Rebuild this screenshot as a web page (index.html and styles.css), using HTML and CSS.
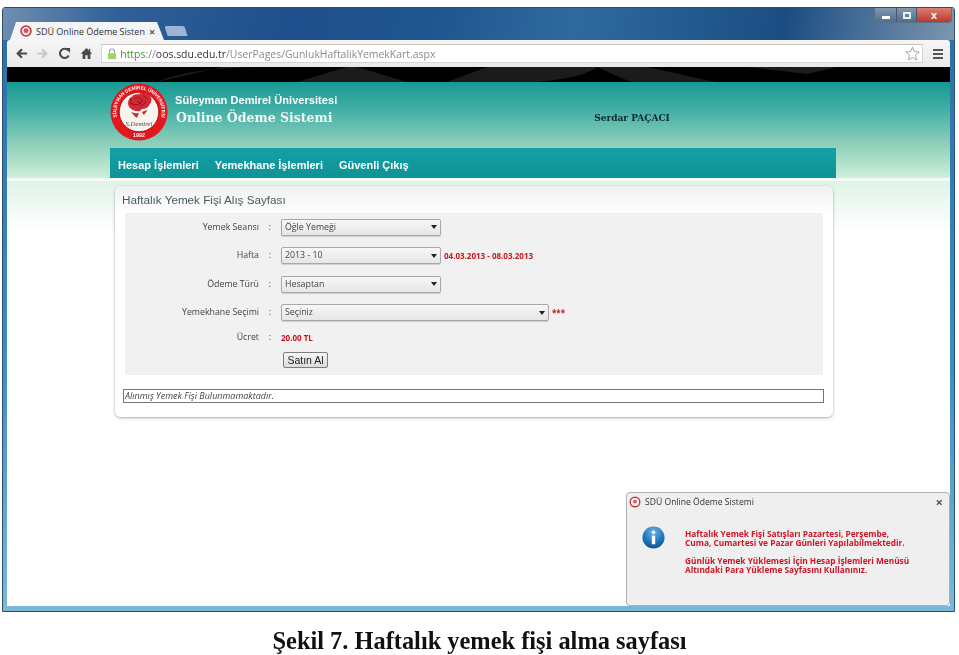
FILE: index.html
```html
<!DOCTYPE html>
<html lang="tr">
<head>
<meta charset="utf-8">
<title>Şekil 7</title>
<link rel="stylesheet" href="styles.css">
</head>
<body>
<div class="shot">
  <div class="window">
    <div class="titlebar">
      <div class="tab">
        <svg class="fav" viewBox="0 0 14 14"><circle cx="7" cy="7" r="5.8" fill="#f4e4e4" stroke="#c8303a" stroke-width="1.8"/><circle cx="7" cy="6.6" r="2.8" fill="#d8505a"/></svg>
        <span class="tab-title">SDÜ Online Ödeme Sisten</span>
        <span class="tab-x">×</span>
      </div>
      <div class="newtab"></div>
      <div class="winctl">
        <span class="wb"><i class="min"></i></span>
        <span class="wb narrow"><i class="max"></i></span>
        <span class="wb close">x</span>
      </div>
    </div>
    <div class="toolbar">
      <svg class="tool" viewBox="0 0 14 14"><path d="M13 7H3.5M7.5 2.5 3 7l4.5 4.5" fill="none" stroke="#4a4a4a" stroke-width="2.4"/></svg>
      <svg class="tool" viewBox="0 0 14 14"><path d="M1 7h9.5M6.5 2.5 11 7l-4.5 4.5" fill="none" stroke="#c4c8cc" stroke-width="2.2"/></svg>
      <svg class="tool" viewBox="0 0 14 14"><path d="M11.6 9.2A5 5 0 1 1 10.8 3.4" fill="none" stroke="#4a4a4a" stroke-width="2.3"/><path d="M8 1h5v5.4z" fill="#4a4a4a"/></svg>
      <svg class="tool" viewBox="0 0 14 14"><path d="M7 1 .8 7.2h2V13h3V9h2.4v4h3V7.2h2L11 5.2V2H9.6v1.8z" fill="#4a4a4a"/></svg>
      <div class="omni">
        <svg class="lock" viewBox="0 0 12 14"><path d="M3 6V4a3 3 0 0 1 6 0v2" fill="none" stroke="#9aa890" stroke-width="1.4"/><rect x="1" y="6" width="10" height="7.4" rx="1" fill="#a2d06a"/></svg>
        <span class="url"><b class="https">https</b><em>://</em><b class="host">oos.sdu.edu.tr</b><em>/UserPages/GunlukHaftalikYemekKart.aspx</em></span>
        <svg class="star" viewBox="0 0 16 16"><path d="M8 1.2 10 6l5.2.4-4 3.4 1.3 5.1L8 12.2l-4.5 2.7 1.3-5.1-4-3.4L6 6z" fill="#fff" stroke="#9aa0a4"/></svg>
      </div>
      <div class="menu"><i></i><i></i><i></i></div>
    </div>
    <div class="page">
      <div class="blackbar">
        <svg class="swirl" viewBox="0 0 943 15" preserveAspectRatio="none"><path d="M150 15C175 4 215 0 260 0H215C190 6 170 10 150 15zM290 15 340 0H350L400 15zM440 15 480 0H590C580 8 560 12 530 15zM625 15C610 10 600 4 590 0H640C670 6 690 12 710 15zM660 0H830L800 7 740 0z" fill="#1b1b1b"/></svg>
      </div>
      <header class="head">
        <div class="head-inner">
          <svg class="logo" viewBox="0 0 60 60">
            <defs><path id="ring" d="M13.3 46.7A23.6 23.6 0 1 1 46.7 46.7"/></defs>
            <circle cx="30" cy="30" r="29.5" fill="#e3181f"/>
            <circle cx="30" cy="30" r="20.5" fill="#f8f4ee" stroke="#a81218" stroke-width="1"/>
            <text class="ring-text"><textPath href="#ring" startOffset="50%" text-anchor="middle">SÜLEYMAN DEMİREL ÜNİVERSİTESİ</textPath></text>
            <path d="M29 12c4-3 10-2 12 1 3 3 2 7 0 9-1 3-4 5-8 5-2 2-3 3-5 2-4 0-8-3-9-6-1-4 1-8 4-9 1-2 4-3 6-2z" fill="#d22a34"/>
            <path d="M25 16c3-2 7-1 8 2M28 19c2 2 5 1 6-1M22 21c3 2 7 2 10 0M31 24c2-1 5-2 6-5M35 13c1 2 2 3 4 3M21 16c1 2 1 3 0 5" fill="none" stroke="#8e1119" stroke-width="1"/>
            <path d="M22 30c3 1 6 2 8 1l-2 5c-2-1-4-3-6-6zM33 30l6-2-4 5z" fill="#c82a34"/>
            <text class="sign" x="30" y="44">S.Demirel</text>
            <text class="year" x="30" y="56">1992</text>
          </svg>
          <div class="brand">
            <div class="brand-top">Süleyman Demirel Üniversitesi</div>
            <div class="brand-main">Online Ödeme Sistemi</div>
          </div>
          <div class="user">Serdar PAÇACI</div>
        </div>
        <nav class="nav">
          <a>Hesap İşlemleri</a>
          <a>Yemekhane İşlemleri</a>
          <a>Güvenli Çıkış</a>
        </nav>
      </header>
      <main class="body">
        <section class="panel">
          <h1 class="panel-title">Haftalık Yemek Fişi Alış Sayfası</h1>
          <div class="form">
            <div class="row">
              <label class="lbl">Yemek Seansı</label><span class="colon">:</span>
              <div class="sel"><span>Öğle Yemeği</span><i></i></div>
            </div>
            <div class="row">
              <label class="lbl">Hafta</label><span class="colon">:</span>
              <div class="sel"><span>2013 - 10</span><i></i></div>
              <span class="red">04.03.2013 - 08.03.2013</span>
            </div>
            <div class="row">
              <label class="lbl">Ödeme Türü</label><span class="colon">:</span>
              <div class="sel"><span>Hesaptan</span><i></i></div>
            </div>
            <div class="row">
              <label class="lbl">Yemekhane Seçimi</label><span class="colon">:</span>
              <div class="sel wide"><span>Seçiniz</span><i></i></div>
              <span class="red stars">***</span>
            </div>
            <div class="row short">
              <label class="lbl">Ücret</label><span class="colon">:</span>
              <span class="red price">20.00 TL</span>
            </div>
            <div class="row btn-row"><button class="buy">Satın Al</button></div>
          </div>
          <div class="note">Alınmış Yemek Fişi Bulunmamaktadır.</div>
        </section>
      </main>
      <aside class="popup">
        <div class="pop-head">
          <svg class="pop-fav" viewBox="0 0 14 14"><circle cx="7" cy="7" r="5.6" fill="#fff" stroke="#c8303a" stroke-width="1.6"/><circle cx="7" cy="6.4" r="2.4" fill="#d8606a"/></svg>
          <span>SDÜ Online Ödeme Sistemi</span>
          <span class="pop-x">×</span>
        </div>
        <div class="pop-body">
          <svg class="info" viewBox="0 0 24 24">
            <defs><radialGradient id="ig" cx="50%" cy="25%" r="80%"><stop offset="0" stop-color="#6cb2e6"/><stop offset=".6" stop-color="#1f74b8"/><stop offset="1" stop-color="#0f4f86"/></radialGradient></defs>
            <circle cx="12" cy="12" r="11.5" fill="url(#ig)"/>
            <circle cx="12" cy="6.6" r="1.9" fill="#fff"/>
            <rect x="10.2" y="10" width="3.6" height="9" fill="#fff"/>
          </svg>
          <div class="msg">
            <p>Haftalık Yemek Fişi Satışları Pazartesi, Perşembe,<br>Cuma, Cumartesi ve Pazar Günleri Yapılabilmektedir.</p>
            <p>Günlük Yemek Yüklemesi İçin Hesap İşlemleri Menüsü<br>Altındaki Para Yükleme Sayfasını Kullanınız.</p>
          </div>
        </div>
      </aside>
    </div>
  </div>
  <p class="caption">Şekil 7. Haftalık yemek fişi alma sayfası</p>
</div>
</body>
</html>
```
FILE: styles.css
```css
* { box-sizing: border-box; }
html, body { margin: 0; height: 100%; background: #fff; overflow: hidden; }
.shot { width: 959px; height: 655px; padding: 7px 4px 0 2px; filter: blur(.35px); }

.window {
  height: 605px;
  padding: 0 4px 5px 4px;
  border: 1px solid #2c4f6e;
  border-radius: 3px 3px 0 0;
  background: linear-gradient(180deg, #2a6fa8 0%, #3f8fc0 60%, #7cb8d8 100%);
  display: flex;
  flex-direction: column;
}

.titlebar {
  height: 32px;
  flex: none;
  margin: 0 -4px;
  padding: 0 0 0 7px;
  display: flex;
  align-items: flex-end;
  background: linear-gradient(100deg, #6f8fb0 0%, #2f6098 12%, #1f4f8c 30%, #1f5590 45%, #2f6a9e 60%, #1b4d82 82%, #7b96b0 100%);
}
.tab {
  width: 154px;
  height: 18px;
  padding: 0 12px 0 10px;
  display: flex;
  align-items: center;
  gap: 4px;
  background: #f3f4f5;
  clip-path: polygon(0 100%, 6px 0, 147px 0, 100% 100%);
  font: 9px "Open Sans", sans-serif;
  color: #333;
}
.fav { width: 12px; height: 12px; flex: none; }
.tab-title { flex: none; white-space: nowrap; }
.tab-x { font-size: 11px; font-weight: 700; color: #555; margin-left: auto; }
.newtab {
  width: 20px;
  height: 10px;
  margin: 0 0 4px 2px;
  background: #9db4d2;
  border-radius: 2px 2px 0 0;
  transform: skewX(18deg);
}
.winctl {
  margin: 0 2px auto auto;
  display: flex;
  height: 15px;
  border: 1px solid #5a7288;
  border-top: 0;
  border-radius: 0 0 4px 4px;
  overflow: hidden;
}
.wb {
  width: 22px;
  display: flex;
  align-items: center;
  justify-content: center;
  background: linear-gradient(#8298ae, #4f6f8e);
  border-right: 1px solid #41586e;
}
.wb.narrow { width: 20px; }
.wb.close {
  width: 34px;
  border: 0;
  background: linear-gradient(#d98072, #c2352c);
  color: #fff;
  font: 700 11px "Liberation Sans", sans-serif;
  line-height: 1;
}
.wb .min { width: 8px; height: 3px; margin-top: 5px; background: #fff; }
.wb .max { width: 8px; height: 7px; border: 2px solid #e8eef2; }

.toolbar {
  height: 27px;
  flex: none;
  padding: 0 0 0 6.5px;
  display: flex;
  align-items: center;
  background: linear-gradient(#f6f6f6, #e9e9e9);
  border-radius: 3px 3px 0 0;
}
.tool { width: 13px; height: 13px; margin: 0 7.7px 0 1px; flex: none; }
.omni {
  width: 822px;
  height: 19px;
  flex: none;
  margin: 0 0 0 1px;
  padding: 0 2px 0 5px;
  display: flex;
  align-items: center;
  background: #fff;
  border: 1px solid #d4d4d4;
  border-top-color: #c9c3bb;
}
.lock { width: 10px; height: 12px; flex: none; margin-right: 3px; }
.url { font: 10.45px "Open Sans", sans-serif; color: #8a8a8a; white-space: nowrap; flex: 1; }
.url b, .url em { font-weight: 400; font-style: normal; }
.url .https { color: #3d9a2c; }
.url .host { color: #333; }
.star { width: 15px; height: 15px; flex: none; }
.menu { margin-left: 9.5px; width: 10px; display: flex; flex-direction: column; gap: 2px; }
.menu i { height: 2px; background: #555; }

.page { flex: 1; position: relative; background: #fff; min-height: 0; display: flex; flex-direction: column; overflow: hidden; }
.blackbar { height: 15px; flex: none; background: #000; }
.swirl { display: block; width: 100%; height: 15px; }
.head {
  height: 96px;
  flex: none;
  display: flex;
  flex-direction: column;
  justify-content: space-between;
  background: linear-gradient(#169a94 0%, #44b0a6 30%, #8fd0ba 65%, #cfeeda 100%);
}
.head-inner { flex: 1; margin-left: 103px; display: flex; align-items: flex-start; }
.logo { width: 58px; height: 58px; margin-top: 1px; flex: none; }
.ring-text { font: 700 4.8px "Liberation Sans", sans-serif; fill: #fff; }
.sign { font: italic 7px "Liberation Serif", serif; fill: #444; text-anchor: middle; }
.year { font: 700 5.5px "Liberation Sans", sans-serif; fill: #fff; text-anchor: middle; }
.brand { margin: 11px 0 0 7px; color: #fff; }
.brand-top { font: 700 11px/14px "Liberation Sans", sans-serif; letter-spacing: .05px; }
.brand-main { font: 700 12.5px/18px "DejaVu Serif", serif; margin: 2px 0 0 1px; color: #eef8f4; }
.user { margin: 29px 0 0 257px; font: 700 9px/14px "DejaVu Serif", serif; color: #0e2a2c; }
.nav {
  height: 30px;
  flex: none;
  margin-left: 103px;
  width: 726px;
  padding: 3px 0 0 8px;
  display: flex;
  align-items: center;
  gap: 16px;
  background: linear-gradient(#14a0a8, #0f9294);
  font: 700 11px "Liberation Sans", sans-serif;
  color: #fff;
}

.body {
  flex: 1;
  padding: 5px 0 0 108px;
  border-top: 3px solid #f4faf6;
  background: linear-gradient(#dff3e6 0, #fff 50px);
}
.panel {
  width: 718px;
  height: 231px;
  padding: 0 10px;
  background: linear-gradient(#f1f1f1 0, #fff 28px);
  border-radius: 6px;
  box-shadow: 0 1px 3px rgba(0,0,0,.35);
}
.panel-title { margin: 0 0 0 -3px; padding: 6px 0 0; height: 27px; font: 400 11.7px/15px "Liberation Sans", sans-serif; color: #4a5a60; }
.form { height: 162px; padding: 5.5px 0 0; background: #f1f1f1; }
.row {
  height: 28.6px;
  display: flex;
  align-items: flex-start;
  font: 8.8px/17px "Open Sans", sans-serif;
  color: #444;
}
.row.short { height: 23.5px; margin-top: -4px; }
.lbl { width: 134px; text-align: right; flex: none; }
.colon { width: 22px; text-align: center; flex: none; }
.sel {
  width: 160px;
  height: 17px;
  padding: 0 3px;
  display: flex;
  justify-content: space-between;
  align-items: center;
  background: linear-gradient(#f7f7f7, #e6e6e6);
  border: 1px solid #a8a8a8;
  border-radius: 2px;
  box-shadow: 0 1px 1px rgba(0,0,0,.15);
}
.sel.wide { width: 268px; }
.sel i { width: 0; height: 0; border: 3.5px solid transparent; border-top: 4px solid #222; border-bottom: 0; }
.red { color: #c8141c; font-weight: 700; font-size: 8px; margin-left: 3px; }
.stars { margin-left: 3px; }
.price { margin-left: 0; }
.btn-row { padding-left: 158px; }
.buy {
  width: 45px;
  height: 16px;
  padding: 0;
  font: 10.5px "Liberation Sans", sans-serif;
  color: #222;
  background: linear-gradient(#f6f6f6, #dcdcdc);
  border: 1px solid #7d7d7d;
  border-radius: 2px;
}
.note {
  width: 701px;
  height: 14px;
  margin: 14px 0 0 -2px;
  padding-left: 1px;
  border: 1px solid #777;
  background: #fff;
  font: italic 9px/12px "Open Sans", sans-serif;
  color: #444;
}

.popup {
  position: absolute;
  right: 0;
  bottom: 0;
  width: 324px;
  height: 114px;
  background: #efefef;
  border: 1px solid #a9b2b8;
  border-radius: 4px;
}
.pop-head {
  height: 17px;
  padding: 0 6px 0 2px;
  display: flex;
  align-items: center;
  gap: 4px;
  font: 8.6px "Open Sans", sans-serif;
  color: #333;
}
.pop-fav { width: 12px; height: 12px; flex: none; }
.pop-x { margin-left: auto; font-size: 13px; font-weight: 700; color: #555; }
.pop-body { padding: 16px 0 0 15px; display: flex; }
.info { width: 23px; height: 23px; flex: none; }
.msg { margin: 3px 0 0 20px; font: 700 8.3px/9px "Open Sans", sans-serif; color: #d01428; white-space: nowrap; }
.msg p { margin: 0 0 9px; }

.caption {
  margin: 16px 0 0;
  text-align: center;
  font: 700 24.4px/26px "Liberation Serif", serif;
  color: #111;
  padding-left: 2px;
}
```
